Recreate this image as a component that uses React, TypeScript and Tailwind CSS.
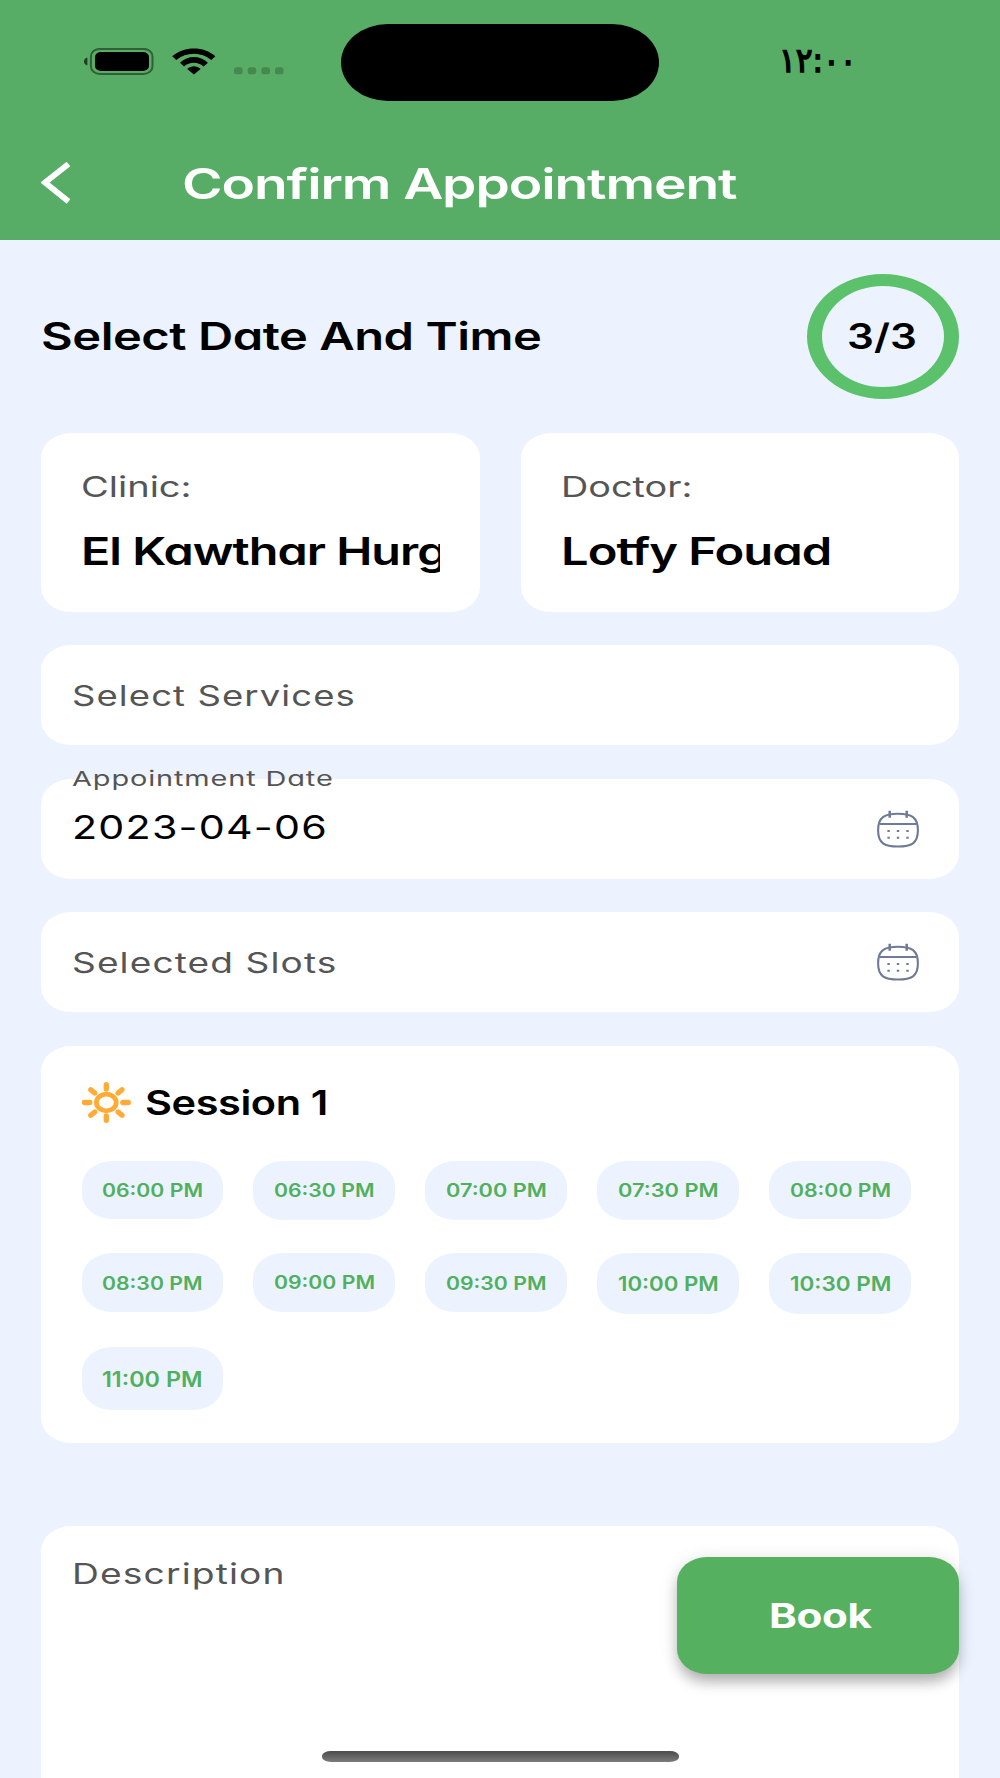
import { useLayoutEffect, useRef, useState } from "react";
import type { ReactNode } from "react";

type WideTextProps = {
  width: number;
  className?: string;
  children: ReactNode;
};

// Widens a single line of text so that it spans the given width
const WideText = ({ width, className = "", children }: WideTextProps) => {
  const ref = useRef<HTMLSpanElement>(null);
  const [scale, setScale] = useState(1);

  useLayoutEffect(() => {
    if (ref.current) {
      setScale(width / ref.current.offsetWidth);
    }
  }, [width]);

  return (
    <div className={`shrink-0 text-left whitespace-nowrap ${className}`} style={{ width }}>
      <span
        ref={ref}
        className="inline-block origin-left"
        style={{ transform: `scaleX(${scale})` }}
      >
        {children}
      </span>
    </div>
  );
};

const StatusIcons = () => (
  <svg width="200" height="28" viewBox="0 0 200 28" className="shrink-0">
    <path d="M3.4 9.5v8C1.2 16.9 0 15.3 0 13.5s1.2-3.4 3.4-4z" fill="#000" fillOpacity="0.65" />
    <rect x="6.9" y="0.9" width="61.600" height="25" rx="9" ry="7.5" fill="none" stroke="#000" strokeOpacity="0.45" strokeWidth="2" />
    <rect x="11" y="4" width="54" height="19" rx="6" ry="5" fill="#000" />
    <path d="M88.2 8.2C100 -2.2 120 -2.2 131.4 8.2L127.3 12C117.5 3.6 102.2 3.6 92.3 12Z" />
    <path d="M96 14.7C103.8 7.2 115.8 7.2 124 14.7L119.6 18.4C113.9 13.5 105.7 13.5 100 18.4Z" />
    <path d="M103.2 21C107 17.3 113 17.3 116.6 21L109.9 26.4Z" />
    <rect x="150" y="19.3" width="8.6" height="7" rx="2.6" fillOpacity="0.21" />
    <rect x="163.7" y="19.3" width="8.6" height="7" rx="2.6" fillOpacity="0.21" />
    <rect x="177.4" y="19.3" width="8.6" height="7" rx="2.6" fillOpacity="0.21" />
    <rect x="191" y="19.3" width="8.6" height="7" rx="2.6" fillOpacity="0.21" />
  </svg>
);

const CalendarIcon = () => (
  <svg width="42" height="38" viewBox="0 0 42 38" fill="none" stroke="#6f7a96" strokeWidth="2.100" className="shrink-0">
    <path d="M21 3.8C34.500 3.800 40.900 7.200 40.900 20.300C40.900 33.400 34.500 36.500 21 36.500C7.500 36.500 1.100 33.400 1.100 20.300C1.100 7.200 7.500 3.800 21 3.800Z" />
    <path d="M2.500 14H39.500" />
    <path d="M12.700 0.700V7.700M29.700 0.700V7.700" strokeWidth="2.500" />
    <path d="M10.400 21H12.800M19.800 21H22.200M29.300 21H31.700M10.400 27.700H12.800M19.800 27.700H22.200M29.300 27.700H31.700" strokeWidth="2" />
  </svg>
);

const SunIcon = () => (
  <svg width="50" height="42" viewBox="0 0 50 42" fill="none" stroke="#ffab35" strokeLinecap="round" className="shrink-0">
    <ellipse cx="24.300" cy="20.500" rx="9.900" ry="8.300" strokeWidth="4.800" />
    <path
      d="M24.300 2.700V7M24.300 34V38.300M2.300 20.500H7.800M40.800 20.500H46.300M8.800 7.700L12.700 11M36.100 30L40 33.300M40 7.700L36.100 11M12.700 30L8.800 33.300"
      strokeWidth="5.300"
    />
  </svg>
);

const slots = [
  { time: "06:00 PM", style: "h-[58.5px] text-[18.5px]" },
  { time: "06:30 PM", style: "h-[59px] text-[18.5px]" },
  { time: "07:00 PM", style: "h-[59px] text-[18.5px]" },
  { time: "07:30 PM", style: "h-[59.5px] text-[19px]" },
  { time: "08:00 PM", style: "h-[58.5px] text-[18.5px]" },
  { time: "08:30 PM", style: "h-[59px] text-[18.5px]" },
  { time: "09:00 PM", style: "h-[58.5px] text-[18.5px]" },
  { time: "09:30 PM", style: "h-[59px] text-[18.5px]" },
  { time: "10:00 PM", style: "h-[60.5px] text-[20px]" },
  { time: "10:30 PM", style: "h-[60.5px] text-[20px]" },
  { time: "11:00 PM", style: "h-[62.5px] text-[21.5px]" },
];

const Header = () => (
  <header className="h-[240px] shrink-0 bg-[#58ad66]">
    <div className="flex h-[125px] items-center pl-[84px]">
      <div className="pb-[2px]">
        <StatusIcons />
      </div>
      <div className="ml-[57px] h-[77px] w-[318px] shrink-0 bg-black [border-radius:47px/38.5px]"></div>
      <WideText width={78} className="ml-[120px] pb-[6px] font-['DejaVu_Sans'] text-[34px] leading-[40px] text-black [-webkit-text-stroke:1.6px_black]">
        ١٢:٠٠
      </WideText>
    </div>
    <div className="mt-[2px] flex h-[113px] items-center pl-[41px]">
      <svg width="30" height="42" viewBox="0 0 30 42" fill="none" stroke="#fff" strokeWidth="5.800" className="mb-[2px] shrink-0">
        <path d="M27.500 2L4 20.500L27.500 39.500" />
      </svg>
      <WideText width={555} className="ml-[111px] text-[42px] leading-[60px] font-semibold tracking-[-0.02em] text-white">
        Confirm Appointment
      </WideText>
    </div>
  </header>
);

const App = () => {
  return (
    <div className="relative flex h-[1778px] w-[1000px] flex-col overflow-hidden bg-[#ecf3ff] font-['Inter',sans-serif] text-black [font-feature-settings:'cv11']">
      <Header />

      <main className="flex flex-col gap-[33.5px] px-[41px] pt-[33.500px]">
        <div className="flex h-[125.500px] items-center justify-between">
          <WideText width={500} className="text-[38px] leading-[60px] font-semibold tracking-[-0.01em]">
            Select Date And Time
          </WideText>
          <div className="flex h-[125.500px] w-[152.500px] items-center justify-center rounded-[50%] border-x-[15.500px] border-y-[12.500px] border-[#5bc16b]">
            <WideText width={70} className="mr-[2px] text-[35px] leading-[50px] font-semibold">
              3/3
            </WideText>
          </div>
        </div>

        <div className="grid h-[179px] grid-cols-2 gap-[41px]">
          <div className="bg-white px-[40px] pt-[30px] [border-radius:30px/25px]">
            <WideText width={110} className="text-[28px] leading-[49px] text-[#555]">
              Clinic:
            </WideText>
            <div className="mt-[9px] overflow-hidden">
              <WideText width={366} className="text-[38px] leading-[60px] font-semibold tracking-[-0.02em]">
                El Kawthar Hurg
              </WideText>
            </div>
          </div>
          <div className="bg-white px-[40.500px] pt-[30px] [border-radius:30px/25px]">
            <WideText width={131} className="text-[28px] leading-[49px] text-[#555]">
              Doctor:
            </WideText>
            <WideText width={270} className="mt-[9px] text-[38px] leading-[60px] font-semibold tracking-[-0.02em]">
              Lotfy Fouad
            </WideText>
          </div>
        </div>

        <div className="flex h-[100px] items-center bg-white pt-[1px] pl-[31px] [border-radius:30px/25px]">
          <WideText width={284} className="text-[28px] leading-[40px] tracking-[0.03em] text-[#555]">
            Select Services
          </WideText>
        </div>

        <div className="relative flex h-[100px] items-center justify-between bg-white pr-[40px] pl-[31px] [border-radius:30px/25px]">
          <WideText width={261} className="absolute -top-[15px] left-[31px] text-[20.500px] leading-[30px] tracking-[0.03em] text-[#555]">
            Appointment Date
          </WideText>
          <WideText width={256} className="pb-[1px] text-[32.500px] leading-[40px] tracking-[0.03em]">
            2023-04-06
          </WideText>
          <CalendarIcon />
        </div>

        <div className="flex h-[100px] items-center justify-between bg-white pr-[40px] pl-[31px] [border-radius:30px/25px]">
          <WideText width={266} className="pt-[2px] text-[28px] leading-[40px] tracking-[0.03em] text-[#555]">
            Selected Slots
          </WideText>
          <CalendarIcon />
        </div>

        <section className="h-[397px] bg-white pt-[36px] pl-[40.500px] [border-radius:30px/25px]">
          <div className="flex h-[42px] items-center">
            <SunIcon />
            <WideText width={183} className="ml-[13px] text-[34px] leading-[42px] font-semibold tracking-[-0.01em]">
              Session 1
            </WideText>
          </div>
          <div className="mt-[37px] grid grid-cols-[repeat(5,141.600px)] grid-rows-[59px_60.500px_62.500px] items-start gap-x-[30.400px] gap-y-[33.500px]">
            {slots.map(({ time, style }) => (
              <button
                key={time}
                className={`flex items-center justify-center bg-[#ecf3ff] pt-[2px] font-semibold text-[#51b05e] [border-radius:30px/25px] ${style}`}
              >
                <WideText width={101}>{time}</WideText>
              </button>
            ))}
          </div>
        </section>

        <div className="mt-[50px] h-[300px] bg-white pt-[28px] pl-[31px] [border-radius:30px/25px]">
          <WideText width={214} className="text-[28px] leading-[40px] tracking-[0.03em] text-[#555]">
            Description
          </WideText>
        </div>
      </main>

      <button className="absolute top-[1557px] left-[677px] flex h-[116.500px] w-[282px] items-center justify-center bg-[#55b160] pt-[1px] text-white shadow-[0_10px_14px_-2px_rgba(0,0,0,0.26),0_2px_18px_rgba(0,0,0,0.12)] [border-radius:30px/25px]">
        <WideText width={102} className="ml-[3px] text-[33.500px] leading-[44px] font-bold tracking-[-0.01em]">
          Book
        </WideText>
      </button>

      <div className="absolute top-[1751px] left-[322px] h-[10.500px] w-[356.500px] bg-linear-to-b from-[#4c4c4c] to-[#7c7c7c] [border-radius:9px/5px]"></div>
    </div>
  );
};

export default App;
